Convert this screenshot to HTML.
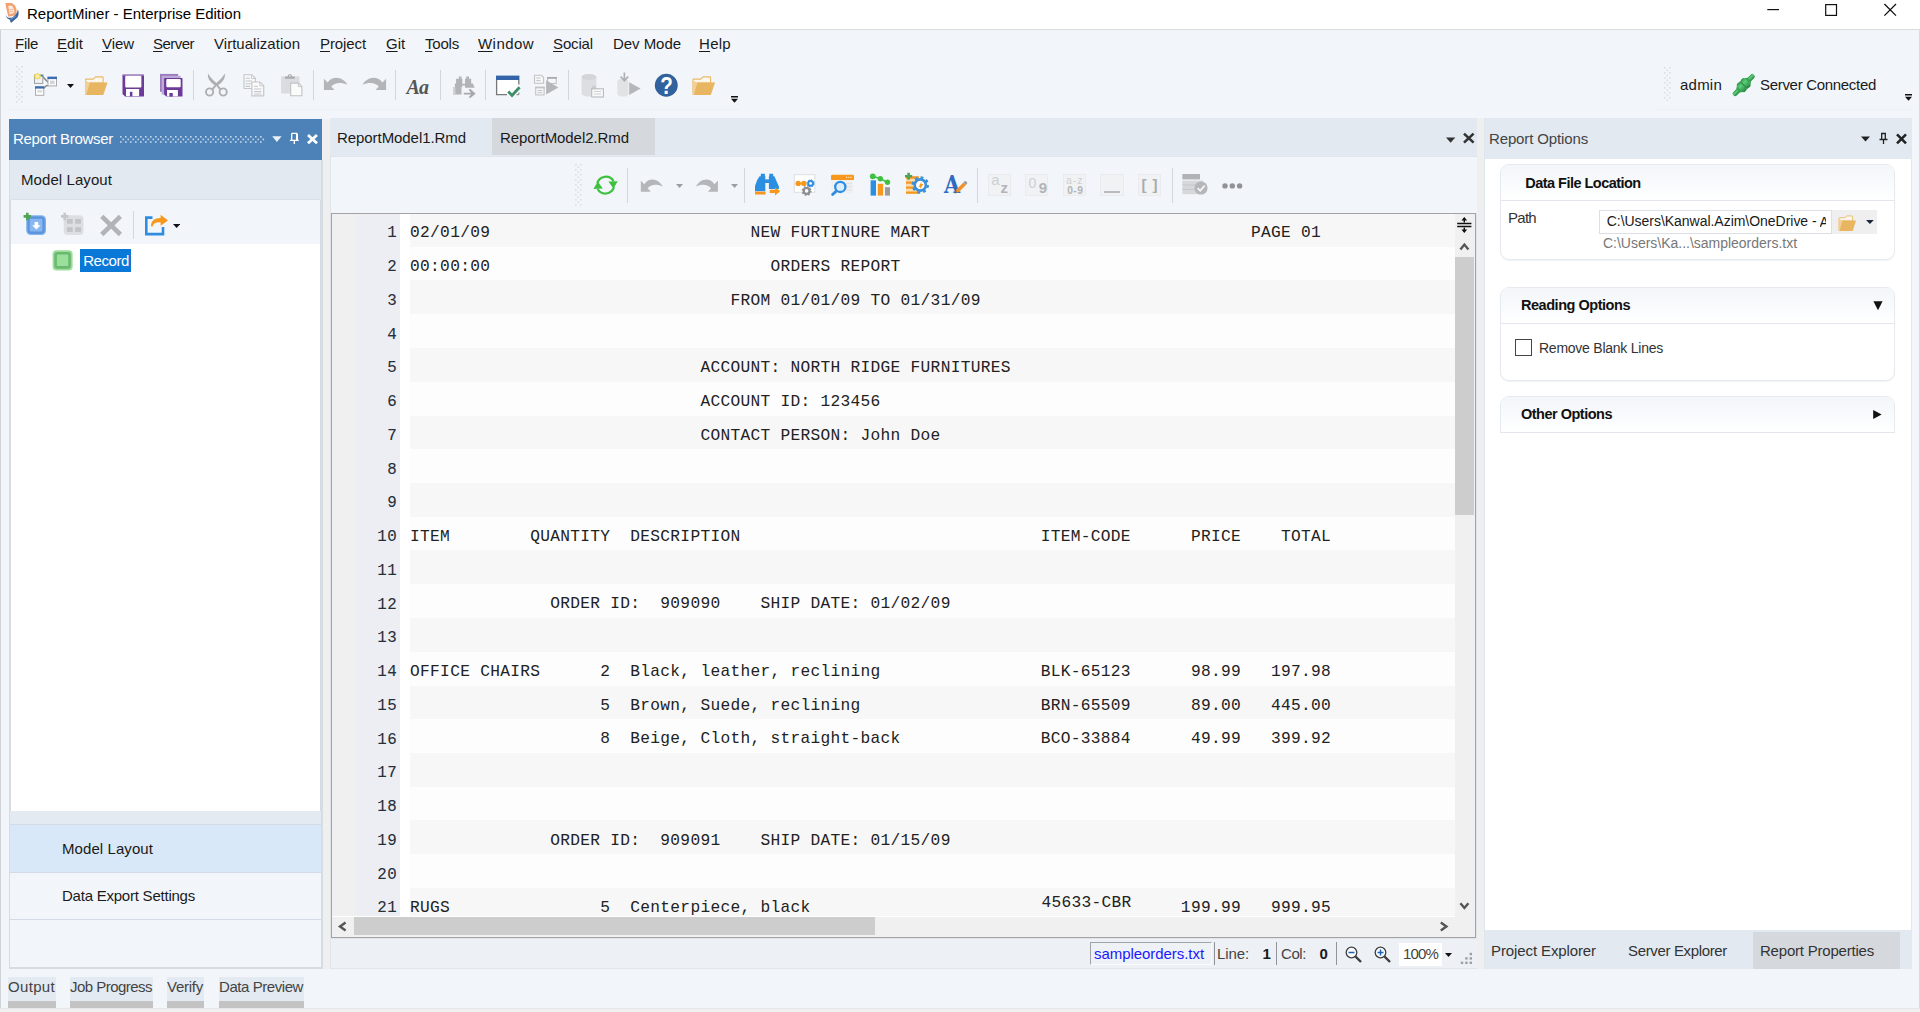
<!DOCTYPE html>
<html><head><meta charset="utf-8"><title>ReportMiner - Enterprise Edition</title>
<style>
html,body{margin:0;padding:0;}
body{width:1920px;height:1012px;overflow:hidden;background:#f2f6fa;position:relative;font-family:"Liberation Sans",sans-serif;}
.t{position:absolute;white-space:pre;margin:0;}
.r{position:absolute;box-sizing:border-box;}
u{text-decoration:underline;text-underline-offset:1.5px;text-decoration-thickness:1px;}
</style></head><body>
<div class="r" style="left:0px;top:0px;width:1920px;height:29px;background:#ffffff;"></div>
<div class="r" style="left:0px;top:29px;width:1920px;height:1px;background:#d9dcdf;"></div>
<div class="r" style="left:0px;top:30px;width:1px;height:982px;background:#d0d4d8;"></div>
<div class="r" style="left:1919px;top:30px;width:1px;height:982px;background:#d9dcdf;"></div>
<div class="t" style="left:27.00px;top:3.80px;font:400 15px/20px 'Liberation Sans',sans-serif;letter-spacing:-0.008px;color:#000;">ReportMiner - Enterprise Edition</div>
<svg class="r" style="left:3px;top:1px" width="19" height="24" viewBox="3 1 19 24"><path d="M5.4 3 L11.6 3.1 C15.4 4.8 17.2 9 16.4 13.4 L14.6 15.6 L8.4 16.8 C7 12 6 7 5.4 3 Z" fill="#f3a170"/><path d="M8.2 6 L11.4 5.6 C13.6 7.4 14.6 10.2 14.2 12.8 L9.8 14.6 Z" fill="#fdeadf"/><path d="M9.5 9.5 H13.5 M9.8 11.6 H13.2" stroke="#f6b993" stroke-width="1"/><path d="M5.7 14.4 C6.4 17.3 9 18.6 12 17.4 C15 16 17.4 13 17.9 9.2 C19 12 18.8 15 17.6 17.2 L11 22.9 L9.6 19.6 C7.5 19 5.9 17 5.7 14.4 Z" fill="#3a689e"/><path d="M10.6 19.4 L15.6 16.2" stroke="#86a6c9" stroke-width="0.9"/></svg>
<svg class="r" style="left:1760px;top:0px;" width="160" height="29" viewBox="0 0 160 29"><path d="M7.3 9.6 H19" stroke="#111" stroke-width="1.2" fill="none"/><rect x="65.7" y="4.6" width="10.8" height="10.8" fill="none" stroke="#111" stroke-width="1.2"/><path d="M124.4 4 L136 15.6 M136 4 L124.4 15.6" stroke="#111" stroke-width="1.3" fill="none"/></svg>
<div class="t" style="left:15.00px;top:33.80px;font:400 15px/20px 'Liberation Sans',sans-serif;letter-spacing:-0.293px;color:#1a1a1a;"><u>F</u>ile</div>
<div class="t" style="left:57.00px;top:33.80px;font:400 15px/20px 'Liberation Sans',sans-serif;letter-spacing:0.038px;color:#1a1a1a;"><u>E</u>dit</div>
<div class="t" style="left:102.00px;top:33.80px;font:400 15px/20px 'Liberation Sans',sans-serif;letter-spacing:-0.061px;color:#1a1a1a;"><u>V</u>iew</div>
<div class="t" style="left:153.00px;top:33.80px;font:400 15px/20px 'Liberation Sans',sans-serif;letter-spacing:-0.530px;color:#1a1a1a;"><u>S</u>erver</div>
<div class="t" style="left:214.00px;top:33.80px;font:400 15px/20px 'Liberation Sans',sans-serif;letter-spacing:0.028px;color:#1a1a1a;">Vi<u>r</u>tualization</div>
<div class="t" style="left:320.00px;top:33.80px;font:400 15px/20px 'Liberation Sans',sans-serif;letter-spacing:-0.098px;color:#1a1a1a;"><u>P</u>roject</div>
<div class="t" style="left:386.00px;top:33.80px;font:400 15px/20px 'Liberation Sans',sans-serif;letter-spacing:-0.056px;color:#1a1a1a;"><u>G</u>it</div>
<div class="t" style="left:425.00px;top:33.80px;font:400 15px/20px 'Liberation Sans',sans-serif;letter-spacing:-0.204px;color:#1a1a1a;"><u>T</u>ools</div>
<div class="t" style="left:478.00px;top:33.80px;font:400 15px/20px 'Liberation Sans',sans-serif;letter-spacing:0.442px;color:#1a1a1a;"><u>W</u>indow</div>
<div class="t" style="left:553.00px;top:33.80px;font:400 15px/20px 'Liberation Sans',sans-serif;letter-spacing:-0.143px;color:#1a1a1a;"><u>S</u>ocial</div>
<div class="t" style="left:613.00px;top:33.80px;font:400 15px/20px 'Liberation Sans',sans-serif;letter-spacing:-0.046px;color:#1a1a1a;">Dev Mode</div>
<div class="t" style="left:699.00px;top:33.80px;font:400 15px/20px 'Liberation Sans',sans-serif;letter-spacing:0.287px;color:#1a1a1a;"><u>H</u>elp</div>
<svg class="r" style="left:16px;top:66px;" width="7" height="37" viewBox="0 0 7 37"><rect x="0" y="0.0" width="1.6" height="1.6" fill="#dbe0e6"/><rect x="5" y="0.0" width="1.6" height="1.6" fill="#dbe0e6"/><rect x="2.5" y="2.5" width="1.6" height="1.6" fill="#dbe0e6"/><rect x="0" y="5.0" width="1.6" height="1.6" fill="#dbe0e6"/><rect x="5" y="5.0" width="1.6" height="1.6" fill="#dbe0e6"/><rect x="2.5" y="7.5" width="1.6" height="1.6" fill="#dbe0e6"/><rect x="0" y="10.0" width="1.6" height="1.6" fill="#dbe0e6"/><rect x="5" y="10.0" width="1.6" height="1.6" fill="#dbe0e6"/><rect x="2.5" y="12.5" width="1.6" height="1.6" fill="#dbe0e6"/><rect x="0" y="15.0" width="1.6" height="1.6" fill="#dbe0e6"/><rect x="5" y="15.0" width="1.6" height="1.6" fill="#dbe0e6"/><rect x="2.5" y="17.5" width="1.6" height="1.6" fill="#dbe0e6"/><rect x="0" y="20.0" width="1.6" height="1.6" fill="#dbe0e6"/><rect x="5" y="20.0" width="1.6" height="1.6" fill="#dbe0e6"/><rect x="2.5" y="22.5" width="1.6" height="1.6" fill="#dbe0e6"/><rect x="0" y="25.0" width="1.6" height="1.6" fill="#dbe0e6"/><rect x="5" y="25.0" width="1.6" height="1.6" fill="#dbe0e6"/><rect x="2.5" y="27.5" width="1.6" height="1.6" fill="#dbe0e6"/><rect x="0" y="30.0" width="1.6" height="1.6" fill="#dbe0e6"/><rect x="5" y="30.0" width="1.6" height="1.6" fill="#dbe0e6"/><rect x="2.5" y="32.5" width="1.6" height="1.6" fill="#dbe0e6"/><rect x="0" y="35.0" width="1.6" height="1.6" fill="#dbe0e6"/><rect x="5" y="35.0" width="1.6" height="1.6" fill="#dbe0e6"/></svg>
<svg class="r" style="left:1664px;top:67px;" width="7" height="35" viewBox="0 0 7 35"><rect x="0" y="0.0" width="1.6" height="1.6" fill="#dbe0e6"/><rect x="5" y="0.0" width="1.6" height="1.6" fill="#dbe0e6"/><rect x="2.5" y="2.5" width="1.6" height="1.6" fill="#dbe0e6"/><rect x="0" y="5.0" width="1.6" height="1.6" fill="#dbe0e6"/><rect x="5" y="5.0" width="1.6" height="1.6" fill="#dbe0e6"/><rect x="2.5" y="7.5" width="1.6" height="1.6" fill="#dbe0e6"/><rect x="0" y="10.0" width="1.6" height="1.6" fill="#dbe0e6"/><rect x="5" y="10.0" width="1.6" height="1.6" fill="#dbe0e6"/><rect x="2.5" y="12.5" width="1.6" height="1.6" fill="#dbe0e6"/><rect x="0" y="15.0" width="1.6" height="1.6" fill="#dbe0e6"/><rect x="5" y="15.0" width="1.6" height="1.6" fill="#dbe0e6"/><rect x="2.5" y="17.5" width="1.6" height="1.6" fill="#dbe0e6"/><rect x="0" y="20.0" width="1.6" height="1.6" fill="#dbe0e6"/><rect x="5" y="20.0" width="1.6" height="1.6" fill="#dbe0e6"/><rect x="2.5" y="22.5" width="1.6" height="1.6" fill="#dbe0e6"/><rect x="0" y="25.0" width="1.6" height="1.6" fill="#dbe0e6"/><rect x="5" y="25.0" width="1.6" height="1.6" fill="#dbe0e6"/><rect x="2.5" y="27.5" width="1.6" height="1.6" fill="#dbe0e6"/><rect x="0" y="30.0" width="1.6" height="1.6" fill="#dbe0e6"/><rect x="5" y="30.0" width="1.6" height="1.6" fill="#dbe0e6"/><rect x="2.5" y="32.5" width="1.6" height="1.6" fill="#dbe0e6"/></svg>
<div class="r" style="left:8px;top:109px;width:732px;height:1px;background:#eef1f3;"></div>
<div class="r" style="left:1655px;top:109px;width:258px;height:1px;background:#eef1f3;"></div>
<div class="r" style="left:193px;top:70px;width:1px;height:30px;background:#d3d7dd;"></div>
<div class="r" style="left:313px;top:70px;width:1px;height:30px;background:#d3d7dd;"></div>
<div class="r" style="left:395px;top:70px;width:1px;height:30px;background:#d3d7dd;"></div>
<div class="r" style="left:440px;top:70px;width:1px;height:30px;background:#d3d7dd;"></div>
<div class="r" style="left:485px;top:70px;width:1px;height:30px;background:#d3d7dd;"></div>
<div class="r" style="left:568px;top:70px;width:1px;height:30px;background:#d3d7dd;"></div>
<svg class="r" style="left:67px;top:84px;" width="7" height="4" viewBox="0 0 7 4"><path d="M0 0 H7 L3.5 4 Z" fill="#111"/></svg>
<svg class="r" style="left:84px;top:75px" width="25" height="21" viewBox="84 75 25 21"><path d="M85.5 79.6 Q85.5 79.1 86 79.1 H93.2 L95.6 76.9 H102.4 Q103.1 76.9 103.1 77.6 V83 H89.5 L85.5 93 Z" fill="#fdf6ea" stroke="#e9b968" stroke-width="1.1"/><path d="M89.3 82.4 H107.6 L103.3 94.9 H85 Z" fill="#e8b661"/><path d="M85 80 V94.9 H86.2 L90 82.4 H89 Z" fill="#f1cf96"/></svg>
<svg class="r" style="left:691px;top:75px" width="25" height="21" viewBox="691 75 25 21"><g transform="translate(607.5,0)"><path d="M85.5 79.6 Q85.5 79.1 86 79.1 H93.2 L95.6 76.9 H102.4 Q103.1 76.9 103.1 77.6 V83 H89.5 L85.5 93 Z" fill="#fdf6ea" stroke="#e9b968" stroke-width="1.1"/><path d="M89.3 82.4 H107.6 L103.3 94.9 H85 Z" fill="#e8b661"/><path d="M85 80 V94.9 H86.2 L90 82.4 H89 Z" fill="#f1cf96"/></g></svg>
<svg class="r" style="left:121px;top:73px" width="25" height="25" viewBox="121 73 25 25"><path d="M122.5 75.2 Q122.5 74.5 123.2 74.5 H143.3 Q144 74.5 144 75.2 V95.9 Q144 96.6 143.3 96.6 H125 L122.5 94.1 Z" fill="#6c3a98"/><rect x="122.5" y="74.5" width="21.5" height="1" fill="#b79fd0"/><rect x="125.2" y="75.8" width="16.2" height="11.6" rx="1" fill="#fff"/><rect x="126" y="89" width="13.1" height="7.3" fill="#fff"/><rect x="129.9" y="91.8" width="2.5" height="4.8" fill="#6c3a98"/><rect x="125" y="96.1" width="15" height="0.6" fill="#a78bc6"/></svg>
<svg class="r" style="left:159px;top:72px" width="26" height="26" viewBox="159 72 26 26"><rect x="160" y="73.9" width="18.1" height="17.9" fill="#9b7dbd"/><rect x="161.7" y="75.8" width="19" height="18.8" fill="#bdaad7"/><path d="M164.1 78.7 Q164.1 78 164.8 78 H181.8 Q182.5 78 182.5 78.7 V95.9 Q182.5 96.6 181.8 96.6 H166.3 L164.1 94.4 Z" fill="#6c3a98"/><rect x="166.3" y="79.1" width="14.4" height="8.1" rx="1" fill="#fff"/><rect x="167" y="90" width="10.9" height="6.3" fill="#fff"/><rect x="169.4" y="93" width="3.4" height="3.6" fill="#6c3a98"/></svg>
<svg class="r" style="left:203px;top:72px" width="27" height="26" viewBox="203 72 27 26"><path d="M208 73.4 C207.2 78 210 82 214.6 85 L211.5 89 L213.2 90 L216.4 86 L216.4 83 C213 80 210 77 208 73.4 Z M224.8 73.4 C225.6 78 222.8 82 218.2 85 L221.3 89 L219.6 90 L216.4 86 L216.4 83 C219.8 80 222.8 77 224.8 73.4 Z" fill="#adafb2"/><circle cx="209.6" cy="92" r="3.6" fill="none" stroke="#adafb2" stroke-width="1.9"/><circle cx="223.2" cy="92" r="3.6" fill="none" stroke="#adafb2" stroke-width="1.9"/></svg>
<svg class="r" style="left:242px;top:73px" width="24" height="25" viewBox="242 73 24 25"><path d="M244 74.7 H251.8 L255.4 78.3 V88.5 H244 Z" fill="#f7f8f9" stroke="#c4c6c9" stroke-width="1.1"/><path d="M251.6 74.9 V78.5 H255.2" fill="none" stroke="#c4c6c9" stroke-width="0.9"/><path d="M245.5 78.3 H250 M245.5 81 H252 M245.5 83.8 H251 M245.5 86.4 H250" stroke="#c4c6c9" stroke-width="1.1"/><path d="M251.9 82 H260 L263.7 85.7 V95.8 H251.9 Z" fill="#fbfbfc" stroke="#c4c6c9" stroke-width="1.2"/><path d="M259.8 82.2 V85.9 H263.5" fill="none" stroke="#c4c6c9" stroke-width="0.9"/><path d="M254 86.3 H258 M254 89 H261.5 M254 91.6 H261.5 M254 94 H261.5" stroke="#c4c6c9" stroke-width="1.1"/></svg>
<svg class="r" style="left:280px;top:72px" width="24" height="26" viewBox="280 72 24 26"><rect x="281.1" y="76.2" width="18.4" height="17.2" rx="1" fill="#dbdcdf"/><path d="M285 78.8 V76.4 H287.6 Q287.8 73.9 289.9 73.9 Q292 73.9 292.2 76.4 H294.8 V78.8 Z" fill="#a9abae"/><circle cx="289.9" cy="75.8" r="0.9" fill="#e8eaed"/><path d="M290.7 83.1 H298.6 L301.9 86.4 V95.8 H290.7 Z" fill="#fbfbfc" stroke="#c0c2c5" stroke-width="1.1"/><path d="M298.4 83.3 V86.6 H301.7" fill="none" stroke="#c0c2c5" stroke-width="0.9"/></svg>
<svg class="r" style="left:322px;top:74px" width="28" height="18" viewBox="322 74 28 18"><path d="M323.9 78.8 L323.9 90 L334.6 90 L331.2 86.4 C334.5 82.6 341 81.8 347.5 84.8 C343.5 77.6 333.5 74.6 327.6 82.4 Z" fill="#b3b5b8"/></svg>
<svg class="r" style="left:360px;top:74px" width="28" height="18" viewBox="360 74 28 18"><g transform="translate(710,0) scale(-1,1)"><path d="M323.9 78.8 L323.9 90 L334.6 90 L331.2 86.4 C334.5 82.6 341 81.8 347.5 84.8 C343.5 77.6 333.5 74.6 327.6 82.4 Z" fill="#b3b5b8"/></g></svg>
<div class="t" style="left:406.50px;top:77.07px;font:700 20px/20px 'Liberation Sans',sans-serif;letter-spacing:-0.834px;color:#555;font-family:'Liberation Serif',serif;font-style:italic;">Aa</div>
<svg class="r" style="left:451px;top:75px" width="27" height="24" viewBox="451 75 27 24"><path d="M458.9 76.6 H461.5 V78.7 H462.3 V83.8 H465 V78.7 H466.2 V76.6 H469 V78.7 H471.2 V83.4 H472.9 L474.6 87.8 H465 V85.5 H462.3 V87.1 H461.5 V94.5 H453 V87.1 H454.9 V83.4 H456.1 V78.7 H458.9 Z" fill="#b1b3b6"/><rect x="453" y="87.1" width="2.4" height="7.4" fill="#d0d2d5"/><path d="M463.8 92.8 H471 L468.6 89.8 L470.4 89 L475.7 93.7 L470.2 98 L468.6 97.2 L471 94.5 H463.8 Z" fill="#a6a8ab"/></svg>
<svg class="r" style="left:494px;top:74px" width="29" height="25" viewBox="494 74 29 25"><rect x="496.6" y="76.2" width="22.2" height="18.5" fill="#ffffff"/><path d="M496.6 80 V94.7 H507" fill="none" stroke="#77787b" stroke-width="1.3"/><path d="M518.8 80 V84.5" fill="none" stroke="#77787b" stroke-width="1.3"/><path d="M516.5 94.7 H518.8 V92.5" fill="none" stroke="#77787b" stroke-width="1"/><rect x="496" y="75.6" width="23.4" height="4.4" fill="#3563a8"/><path d="M508.3 91.6 L512 95.4 L519.6 87.3" fill="none" stroke="#3c9069" stroke-width="2.9"/></svg>
<svg class="r" style="left:532px;top:73px" width="28" height="25" viewBox="532 73 28 25"><g fill="#f6f7f8" stroke="#c1c3c6" stroke-width="1.1"><path d="M534.5 75.3 H541.5 L543.6 77.5 V83.3 H534.5 Z"/><rect x="547.6" y="77.5" width="8.6" height="6"/><rect x="535.7" y="87.3" width="8.4" height="7.6"/></g><rect x="547" y="77" width="9.8" height="1.8" fill="#a9abae"/><rect x="535.2" y="86.8" width="9.4" height="1.6" fill="#c1c3c6"/><path d="M536.3 78 H540.5 M536.3 80.6 H540.5 M537.6 90.5 H542.3 M537.6 92.7 H542.3" stroke="#c1c3c6" stroke-width="1"/><path d="M546.1 80.2 L558.4 87.4 L546.1 94.6 Z" fill="#b4b6b9"/></svg>
<svg class="r" style="left:580px;top:72px" width="26" height="27" viewBox="580 72 26 27"><path d="M581.6 77 C581.6 72.9 596.4 72.9 596.4 77 V93.5 C596.4 97.6 581.6 97.6 581.6 93.5 Z" fill="#dddee1"/><ellipse cx="589" cy="77" rx="7.4" ry="3" fill="#d4d5d8"/><path d="M592 86 L595 89 M595 85.5 V89 H591.5" stroke="#c3c5c8" stroke-width="1.1" fill="none"/><rect x="591.7" y="88.8" width="11.7" height="8.2" fill="#f8f9fa" stroke="#b9bbbe" stroke-width="1.1"/><path d="M594 91.5 H601 M594 94 H601" stroke="#cfd1d4" stroke-width="1"/></svg>
<svg class="r" style="left:616px;top:71px" width="27" height="27" viewBox="616 71 27 27"><path d="M617.4 81.5 C617.4 78.3 628.4 78.3 628.4 81.5 V94 C628.4 97.4 617.4 97.4 617.4 94 Z" fill="#e1e2e4"/><path d="M624.4 72.6 V80 M620.6 76.6 L624.4 80.8 L628.2 76.6" stroke="#aeb0b3" stroke-width="1.7" fill="none"/><path d="M629.2 82.2 L640.6 88.6 L629.2 95 Z" fill="#b4b6b9"/></svg>
<svg class="r" style="left:653px;top:72px" width="27" height="26" viewBox="653 72 27 26"><circle cx="666.3" cy="85.25" r="11.45" fill="#31629e"/></svg>
<div class="t" style="left:658.90px;top:76.41px;font:700 24.5px/20px 'Liberation Sans',sans-serif;letter-spacing:0.000px;color:#fff;transform:scaleX(0.84);transform-origin:50% 50%;">?</div>
<svg class="r" style="left:731px;top:96.3px" width="8" height="8.0" viewBox="731 96.3 8 8.0"><path d="M731 96.3 H738 V97.8 H731 Z M731 99.1 H738 L734.5 103.1 Z" fill="#111"/></svg>
<svg class="r" style="left:1905px;top:94.3px" width="8" height="8.0" viewBox="1905 94.3 8 8.0"><path d="M1905 94.3 H1912 V95.8 H1905 Z M1905 97.1 H1912 L1908.5 101.1 Z" fill="#111"/></svg>
<div class="t" style="left:1680.00px;top:74.80px;font:400 15px/20px 'Liberation Sans',sans-serif;letter-spacing:0.229px;color:#1a1a1a;">admin</div>
<div class="t" style="left:1760.00px;top:74.80px;font:400 15px/20px 'Liberation Sans',sans-serif;letter-spacing:-0.307px;color:#1a1a1a;">Server Connected</div>
<svg class="r" style="left:1730px;top:72px" width="28" height="27" viewBox="1730 72 28 27"><defs><linearGradient id="pg" x1="0" y1="0" x2="0" y2="1"><stop offset="0" stop-color="#2a9443"/><stop offset="0.35" stop-color="#5ccf7d"/><stop offset="1" stop-color="#23853a"/></linearGradient></defs><g transform="translate(1743.7,85.1) rotate(-45)"><rect x="-14.6" y="-2.4" width="12" height="4.8" rx="2.2" fill="url(#pg)"/><rect x="2.6" y="-2.4" width="12" height="4.8" rx="2.2" fill="url(#pg)"/><path d="M-8 -2.4 L-5 -4.6 V4.6 L-8 2.4 Z M8 -2.4 L5 -4.6 V4.6 L8 2.4 Z" fill="#38a553"/><rect x="-5.4" y="-5.6" width="5.2" height="11.2" rx="2" fill="url(#pg)"/><rect x="0.2" y="-5.6" width="5.2" height="11.2" rx="2" fill="url(#pg)"/><rect x="-0.5" y="-5.4" width="1" height="10.8" fill="#1c7a34"/></g></svg>
<svg class="r" style="left:32px;top:71px" width="28" height="27" viewBox="32 71 28 27"><path d="M42.6 76.6 L48 82.2 M48 85.6 H46.4 L43.8 88.2" stroke="#808285" stroke-width="1.4" fill="none"/>
<rect x="34.5" y="75.2" width="8.3" height="8.2" fill="#f1f2f3" stroke="#9d9fa2" stroke-width="1"/><rect x="40" y="74.7" width="3.3" height="1.8" fill="#4a7fc1"/>
<rect x="48" y="77.3" width="8.5" height="8.6" fill="#ffffff" stroke="#a9abae" stroke-width="1"/><rect x="47.5" y="76.7" width="9.5" height="2.4" fill="#3b6db3"/><rect x="50" y="80.6" width="4.6" height="3.6" fill="#d3d4d6"/>
<rect x="35.5" y="86.9" width="8.3" height="8.4" fill="#ffffff" stroke="#a9abae" stroke-width="1"/><rect x="35" y="86.3" width="9.3" height="2.3" fill="#3b6db3"/><rect x="37.2" y="90" width="5" height="2.6" fill="#dcdddf"/>
<path d="M37.5 72.4 L38.6 74 L40.5 73.4 L40.2 75.3 L41.9 76.2 L40.2 77.1 L40.5 79 L38.6 78.4 L37.5 80 L36.4 78.4 L34.5 79 L34.8 77.1 L33.1 76.2 L34.8 75.3 L34.5 73.4 L36.4 74 Z" fill="#f3d544"/><circle cx="37.5" cy="76.2" r="2" fill="#fbf0a5"/></svg>
<div class="r" style="left:9px;top:119px;width:314px;height:850px;background:#d6dce3;"></div>
<div class="r" style="left:9px;top:119px;width:313px;height:41px;background:#4d82b8;"></div>
<div class="t" style="left:13.00px;top:129.10px;font:400 15px/20px 'Liberation Sans',sans-serif;letter-spacing:-0.300px;color:#ffffff;">Report Browser</div>
<svg class="r" style="left:120px;top:136px;" width="150" height="8" viewBox="0 0 150 8"><rect x="0.0" y="0.0" width="1.6" height="1.6" fill="#c3d6ea"/><rect x="5.0" y="0.0" width="1.6" height="1.6" fill="#c3d6ea"/><rect x="10.0" y="0.0" width="1.6" height="1.6" fill="#c3d6ea"/><rect x="15.0" y="0.0" width="1.6" height="1.6" fill="#c3d6ea"/><rect x="20.0" y="0.0" width="1.6" height="1.6" fill="#c3d6ea"/><rect x="25.0" y="0.0" width="1.6" height="1.6" fill="#c3d6ea"/><rect x="30.0" y="0.0" width="1.6" height="1.6" fill="#c3d6ea"/><rect x="35.0" y="0.0" width="1.6" height="1.6" fill="#c3d6ea"/><rect x="40.0" y="0.0" width="1.6" height="1.6" fill="#c3d6ea"/><rect x="45.0" y="0.0" width="1.6" height="1.6" fill="#c3d6ea"/><rect x="50.0" y="0.0" width="1.6" height="1.6" fill="#c3d6ea"/><rect x="55.0" y="0.0" width="1.6" height="1.6" fill="#c3d6ea"/><rect x="60.0" y="0.0" width="1.6" height="1.6" fill="#c3d6ea"/><rect x="65.0" y="0.0" width="1.6" height="1.6" fill="#c3d6ea"/><rect x="70.0" y="0.0" width="1.6" height="1.6" fill="#c3d6ea"/><rect x="75.0" y="0.0" width="1.6" height="1.6" fill="#c3d6ea"/><rect x="80.0" y="0.0" width="1.6" height="1.6" fill="#c3d6ea"/><rect x="85.0" y="0.0" width="1.6" height="1.6" fill="#c3d6ea"/><rect x="90.0" y="0.0" width="1.6" height="1.6" fill="#c3d6ea"/><rect x="95.0" y="0.0" width="1.6" height="1.6" fill="#c3d6ea"/><rect x="100.0" y="0.0" width="1.6" height="1.6" fill="#c3d6ea"/><rect x="105.0" y="0.0" width="1.6" height="1.6" fill="#c3d6ea"/><rect x="110.0" y="0.0" width="1.6" height="1.6" fill="#c3d6ea"/><rect x="115.0" y="0.0" width="1.6" height="1.6" fill="#c3d6ea"/><rect x="120.0" y="0.0" width="1.6" height="1.6" fill="#c3d6ea"/><rect x="125.0" y="0.0" width="1.6" height="1.6" fill="#c3d6ea"/><rect x="130.0" y="0.0" width="1.6" height="1.6" fill="#c3d6ea"/><rect x="135.0" y="0.0" width="1.6" height="1.6" fill="#c3d6ea"/><rect x="140.0" y="0.0" width="1.6" height="1.6" fill="#c3d6ea"/><rect x="2.5" y="2.6" width="1.6" height="1.6" fill="#c3d6ea"/><rect x="7.5" y="2.6" width="1.6" height="1.6" fill="#c3d6ea"/><rect x="12.5" y="2.6" width="1.6" height="1.6" fill="#c3d6ea"/><rect x="17.5" y="2.6" width="1.6" height="1.6" fill="#c3d6ea"/><rect x="22.5" y="2.6" width="1.6" height="1.6" fill="#c3d6ea"/><rect x="27.5" y="2.6" width="1.6" height="1.6" fill="#c3d6ea"/><rect x="32.5" y="2.6" width="1.6" height="1.6" fill="#c3d6ea"/><rect x="37.5" y="2.6" width="1.6" height="1.6" fill="#c3d6ea"/><rect x="42.5" y="2.6" width="1.6" height="1.6" fill="#c3d6ea"/><rect x="47.5" y="2.6" width="1.6" height="1.6" fill="#c3d6ea"/><rect x="52.5" y="2.6" width="1.6" height="1.6" fill="#c3d6ea"/><rect x="57.5" y="2.6" width="1.6" height="1.6" fill="#c3d6ea"/><rect x="62.5" y="2.6" width="1.6" height="1.6" fill="#c3d6ea"/><rect x="67.5" y="2.6" width="1.6" height="1.6" fill="#c3d6ea"/><rect x="72.5" y="2.6" width="1.6" height="1.6" fill="#c3d6ea"/><rect x="77.5" y="2.6" width="1.6" height="1.6" fill="#c3d6ea"/><rect x="82.5" y="2.6" width="1.6" height="1.6" fill="#c3d6ea"/><rect x="87.5" y="2.6" width="1.6" height="1.6" fill="#c3d6ea"/><rect x="92.5" y="2.6" width="1.6" height="1.6" fill="#c3d6ea"/><rect x="97.5" y="2.6" width="1.6" height="1.6" fill="#c3d6ea"/><rect x="102.5" y="2.6" width="1.6" height="1.6" fill="#c3d6ea"/><rect x="107.5" y="2.6" width="1.6" height="1.6" fill="#c3d6ea"/><rect x="112.5" y="2.6" width="1.6" height="1.6" fill="#c3d6ea"/><rect x="117.5" y="2.6" width="1.6" height="1.6" fill="#c3d6ea"/><rect x="122.5" y="2.6" width="1.6" height="1.6" fill="#c3d6ea"/><rect x="127.5" y="2.6" width="1.6" height="1.6" fill="#c3d6ea"/><rect x="132.5" y="2.6" width="1.6" height="1.6" fill="#c3d6ea"/><rect x="137.5" y="2.6" width="1.6" height="1.6" fill="#c3d6ea"/><rect x="142.5" y="2.6" width="1.6" height="1.6" fill="#c3d6ea"/><rect x="0.0" y="5.2" width="1.6" height="1.6" fill="#c3d6ea"/><rect x="5.0" y="5.2" width="1.6" height="1.6" fill="#c3d6ea"/><rect x="10.0" y="5.2" width="1.6" height="1.6" fill="#c3d6ea"/><rect x="15.0" y="5.2" width="1.6" height="1.6" fill="#c3d6ea"/><rect x="20.0" y="5.2" width="1.6" height="1.6" fill="#c3d6ea"/><rect x="25.0" y="5.2" width="1.6" height="1.6" fill="#c3d6ea"/><rect x="30.0" y="5.2" width="1.6" height="1.6" fill="#c3d6ea"/><rect x="35.0" y="5.2" width="1.6" height="1.6" fill="#c3d6ea"/><rect x="40.0" y="5.2" width="1.6" height="1.6" fill="#c3d6ea"/><rect x="45.0" y="5.2" width="1.6" height="1.6" fill="#c3d6ea"/><rect x="50.0" y="5.2" width="1.6" height="1.6" fill="#c3d6ea"/><rect x="55.0" y="5.2" width="1.6" height="1.6" fill="#c3d6ea"/><rect x="60.0" y="5.2" width="1.6" height="1.6" fill="#c3d6ea"/><rect x="65.0" y="5.2" width="1.6" height="1.6" fill="#c3d6ea"/><rect x="70.0" y="5.2" width="1.6" height="1.6" fill="#c3d6ea"/><rect x="75.0" y="5.2" width="1.6" height="1.6" fill="#c3d6ea"/><rect x="80.0" y="5.2" width="1.6" height="1.6" fill="#c3d6ea"/><rect x="85.0" y="5.2" width="1.6" height="1.6" fill="#c3d6ea"/><rect x="90.0" y="5.2" width="1.6" height="1.6" fill="#c3d6ea"/><rect x="95.0" y="5.2" width="1.6" height="1.6" fill="#c3d6ea"/><rect x="100.0" y="5.2" width="1.6" height="1.6" fill="#c3d6ea"/><rect x="105.0" y="5.2" width="1.6" height="1.6" fill="#c3d6ea"/><rect x="110.0" y="5.2" width="1.6" height="1.6" fill="#c3d6ea"/><rect x="115.0" y="5.2" width="1.6" height="1.6" fill="#c3d6ea"/><rect x="120.0" y="5.2" width="1.6" height="1.6" fill="#c3d6ea"/><rect x="125.0" y="5.2" width="1.6" height="1.6" fill="#c3d6ea"/><rect x="130.0" y="5.2" width="1.6" height="1.6" fill="#c3d6ea"/><rect x="135.0" y="5.2" width="1.6" height="1.6" fill="#c3d6ea"/><rect x="140.0" y="5.2" width="1.6" height="1.6" fill="#c3d6ea"/></svg>
<svg class="r" style="left:270px;top:131px" width="50" height="16" viewBox="270 131 50 16"><path d="M272.2 136.3 H281.6 L276.9 141.9 Z" fill="#e8f0f8"/><path d="M291.6 133.4 H297.2 M291.7 133.4 V140.4 M296.6 133.4 V140.4 M289.9 140.4 H298.8 M294.3 140.4 V144" stroke="#fff" stroke-width="1.3" fill="none"/><path d="M297 133.4 V140.4" stroke="#fff" stroke-width="2"/><path d="M308 135 L317 143.2 M317 135 L308 143.2" stroke="#fff" stroke-width="2.8" fill="none"/></svg>
<div class="r" style="left:10px;top:160px;width:311px;height:40px;background:#e2e9f1;"></div>
<div class="t" style="left:21.00px;top:169.80px;font:400 15px/20px 'Liberation Sans',sans-serif;letter-spacing:0.078px;color:#1a1a1a;">Model Layout</div>
<div class="r" style="left:11px;top:200px;width:309px;height:611px;background:#ffffff;"></div>
<div class="r" style="left:11px;top:200px;width:309px;height:44px;background:#f2f6fa;"></div>
<div class="r" style="left:11px;top:199px;width:309px;height:1px;background:#d9e0e8;"></div>
<div class="r" style="left:133px;top:211px;width:1px;height:28px;background:#d3d7dd;"></div>
<svg class="r" style="left:173.2px;top:224px;" width="7.2" height="4" viewBox="0 0 7.2 4"><path d="M0 0 H7.2 L3.6 4 Z" fill="#111"/></svg>
<svg class="r" style="left:22px;top:211px" width="26" height="26" viewBox="22 211 26 26"><rect x="26.2" y="215.3" width="19.8" height="19.8" rx="4.5" fill="#7fb2ef"/><rect x="28.6" y="217.7" width="15" height="15" rx="2.5" fill="#86b7f2" stroke="#5b92d9" stroke-width="2.2"/><path d="M34.6 222 H38.2 V225.2 H40.6 L36.4 229.6 L32.2 225.2 H34.6 Z" fill="#fff"/><path d="M27.3 212.7 V220.2 M23.6 216.4 H31" stroke="#4ea454" stroke-width="2.6"/></svg>
<svg class="r" style="left:59px;top:211px" width="27" height="26" viewBox="59 211 27 26"><rect x="63.7" y="215.3" width="19.8" height="19.8" rx="4" fill="#dddee1"/><g fill="#c2c3c6"><rect x="66.9" y="219" width="5.8" height="4.7"/><rect x="75.2" y="219" width="5.8" height="4.7"/><rect x="66.9" y="227.2" width="5.8" height="4.7"/><rect x="75.2" y="227.2" width="5.8" height="4.7"/></g><path d="M64.7 212.7 V220.2 M61 216.4 H68.4" stroke="#c6c7ca" stroke-width="2.6"/></svg>
<svg class="r" style="left:98px;top:213px" width="26" height="25" viewBox="98 213 26 25"><path d="M101.8 216.3 L120.4 234.5 M120.4 216.3 L101.8 234.5" stroke="#b2b3b6" stroke-width="4.6" fill="none"/></svg>
<svg class="r" style="left:143px;top:213px" width="27" height="25" viewBox="143 213 27 25"><path d="M152.5 217.6 H146.3 V234.1 H163 V227" fill="none" stroke="#2e8de0" stroke-width="2.6"/><path d="M151 226.3 C151 220.5 155 217.8 160.6 218 V214.8 L168 220.4 L160.6 225.8 V222.4 C156.5 222.2 153.5 223 152.6 226.6 Z" fill="#f7981d"/></svg>
<svg class="r" style="left:51px;top:249px" width="24" height="23" viewBox="51 249 24 23"><rect x="52.6" y="250.2" width="20" height="20.2" rx="4" fill="#9ade9a"/><rect x="55.6" y="253.2" width="14" height="14.2" rx="2" fill="#9be09a" stroke="#6bb870" stroke-width="2.6"/></svg>
<div class="r" style="left:80px;top:249px;width:51px;height:22.5px;background:#0a78d7;"></div>
<div class="t" style="left:83.20px;top:250.70px;font:400 15px/20px 'Liberation Sans',sans-serif;letter-spacing:-0.426px;color:#ffffff;">Record</div>
<div class="r" style="left:10px;top:811px;width:311px;height:14px;background:#e3eaf2;"></div>
<div class="r" style="left:10px;top:825px;width:311px;height:47px;background:#d9e8f8;"></div>
<div class="r" style="left:10px;top:824px;width:311px;height:1px;background:#d3dce6;"></div>
<div class="r" style="left:10px;top:872px;width:311px;height:1px;background:#d3dce6;"></div>
<div class="r" style="left:10px;top:873px;width:311px;height:46px;background:#f2f6fa;"></div>
<div class="r" style="left:10px;top:919px;width:311px;height:1px;background:#d3dce6;"></div>
<div class="r" style="left:10px;top:920px;width:311px;height:47px;background:#f2f6fa;"></div>
<div class="t" style="left:62.00px;top:838.80px;font:400 15px/20px 'Liberation Sans',sans-serif;letter-spacing:0.078px;color:#1a1a1a;">Model Layout</div>
<div class="t" style="left:62.00px;top:886.30px;font:400 15px/20px 'Liberation Sans',sans-serif;letter-spacing:-0.229px;color:#1a1a1a;">Data Export Settings</div>
<div class="r" style="left:8px;top:977px;width:48px;height:24px;background:#e3eaf2;"></div>
<div class="r" style="left:8px;top:1001px;width:48px;height:7.4px;background:#c3c3c3;"></div>
<div class="t" style="left:8.00px;top:976.80px;font:400 15px/20px 'Liberation Sans',sans-serif;letter-spacing:0.328px;color:#444;">Output</div>
<div class="r" style="left:70px;top:977px;width:83px;height:24px;background:#e3eaf2;"></div>
<div class="r" style="left:70px;top:1001px;width:83px;height:7.4px;background:#c3c3c3;"></div>
<div class="t" style="left:70.00px;top:976.80px;font:400 15px/20px 'Liberation Sans',sans-serif;letter-spacing:-0.531px;color:#444;">Job Progress</div>
<div class="r" style="left:167px;top:977px;width:37px;height:24px;background:#e3eaf2;"></div>
<div class="r" style="left:167px;top:1001px;width:37px;height:7.4px;background:#c3c3c3;"></div>
<div class="t" style="left:167.00px;top:976.80px;font:400 15px/20px 'Liberation Sans',sans-serif;letter-spacing:-0.253px;color:#444;">Verify</div>
<div class="r" style="left:219px;top:977px;width:85px;height:24px;background:#e3eaf2;"></div>
<div class="r" style="left:219px;top:1001px;width:85px;height:7.4px;background:#c3c3c3;"></div>
<div class="t" style="left:219.00px;top:976.80px;font:400 15px/20px 'Liberation Sans',sans-serif;letter-spacing:-0.434px;color:#444;">Data Preview</div>
<div class="r" style="left:0px;top:1008px;width:1920px;height:1px;background:#e4e6e8;"></div>
<div class="r" style="left:0px;top:1009px;width:1920px;height:3px;background:#f0f0f0;"></div>
<div class="r" style="left:322px;top:119px;width:8px;height:41px;background:#efefef;"></div>
<div class="r" style="left:323px;top:160px;width:7px;height:809px;background:#efefef;"></div>
<div class="r" style="left:330px;top:118px;width:1147px;height:851px;background:#dfe5eb;"></div>
<div class="r" style="left:330px;top:118px;width:1147px;height:38px;background:#e2e9f1;"></div>
<div class="r" style="left:492px;top:118px;width:163px;height:37px;background:#d5d9de;"></div>
<div class="t" style="left:337.00px;top:127.80px;font:400 15px/20px 'Liberation Sans',sans-serif;letter-spacing:-0.066px;color:#1a1a1a;">ReportModel1.Rmd</div>
<div class="t" style="left:500.00px;top:127.80px;font:400 15px/20px 'Liberation Sans',sans-serif;letter-spacing:-0.066px;color:#1a1a1a;">ReportModel2.Rmd</div>
<svg class="r" style="left:1445px;top:131px;" width="34" height="14" viewBox="0 0 34 14"><path d="M1 6.6 H10.3 L5.65 11.7 Z" fill="#333"/><path d="M19 2.6 L28.6 11.6 M28.6 2.6 L19 11.6" stroke="#333" stroke-width="2.6" fill="none"/></svg>
<div class="r" style="left:331px;top:157px;width:1146px;height:56px;background:#f2f6fa;"></div>
<svg class="r" style="left:575px;top:164px;" width="7" height="42" viewBox="0 0 7 42"><rect x="0" y="0.0" width="1.6" height="1.6" fill="#dbe0e6"/><rect x="5" y="0.0" width="1.6" height="1.6" fill="#dbe0e6"/><rect x="2.5" y="2.5" width="1.6" height="1.6" fill="#dbe0e6"/><rect x="0" y="5.0" width="1.6" height="1.6" fill="#dbe0e6"/><rect x="5" y="5.0" width="1.6" height="1.6" fill="#dbe0e6"/><rect x="2.5" y="7.5" width="1.6" height="1.6" fill="#dbe0e6"/><rect x="0" y="10.0" width="1.6" height="1.6" fill="#dbe0e6"/><rect x="5" y="10.0" width="1.6" height="1.6" fill="#dbe0e6"/><rect x="2.5" y="12.5" width="1.6" height="1.6" fill="#dbe0e6"/><rect x="0" y="15.0" width="1.6" height="1.6" fill="#dbe0e6"/><rect x="5" y="15.0" width="1.6" height="1.6" fill="#dbe0e6"/><rect x="2.5" y="17.5" width="1.6" height="1.6" fill="#dbe0e6"/><rect x="0" y="20.0" width="1.6" height="1.6" fill="#dbe0e6"/><rect x="5" y="20.0" width="1.6" height="1.6" fill="#dbe0e6"/><rect x="2.5" y="22.5" width="1.6" height="1.6" fill="#dbe0e6"/><rect x="0" y="25.0" width="1.6" height="1.6" fill="#dbe0e6"/><rect x="5" y="25.0" width="1.6" height="1.6" fill="#dbe0e6"/><rect x="2.5" y="27.5" width="1.6" height="1.6" fill="#dbe0e6"/><rect x="0" y="30.0" width="1.6" height="1.6" fill="#dbe0e6"/><rect x="5" y="30.0" width="1.6" height="1.6" fill="#dbe0e6"/><rect x="2.5" y="32.5" width="1.6" height="1.6" fill="#dbe0e6"/><rect x="0" y="35.0" width="1.6" height="1.6" fill="#dbe0e6"/><rect x="5" y="35.0" width="1.6" height="1.6" fill="#dbe0e6"/><rect x="2.5" y="37.5" width="1.6" height="1.6" fill="#dbe0e6"/><rect x="0" y="40.0" width="1.6" height="1.6" fill="#dbe0e6"/><rect x="5" y="40.0" width="1.6" height="1.6" fill="#dbe0e6"/></svg>
<div class="r" style="left:627px;top:168px;width:1px;height:35px;background:#d3d7dd;"></div>
<div class="r" style="left:744px;top:168px;width:1px;height:35px;background:#d3d7dd;"></div>
<div class="r" style="left:977px;top:168px;width:1px;height:35px;background:#d3d7dd;"></div>
<div class="r" style="left:1172px;top:168px;width:1px;height:35px;background:#d3d7dd;"></div>
<div class="r" style="left:331px;top:213px;width:1145px;height:725px;background:#f0f0f0;border:1px solid #a3a3a3;"></div>
<div class="r" style="left:332px;top:214px;width:24px;height:703px;background:#f0f0f0;"></div>
<div class="r" style="left:355px;top:214px;width:45px;height:703px;background:linear-gradient(90deg,#f0f0f0 0px,#edeef4 2px);"></div>
<div class="r" style="left:400px;top:214px;width:10px;height:703px;background:#ffffff;"></div>
<div class="r" style="left:410px;top:214px;width:1045px;height:703px;background:#fdfdfd;"></div>
<div class="r" style="left:410px;top:214px;width:1045px;height:33px;background:#f7f7f7;"></div>
<div class="t" style="left:410.10px;top:223.19px;font:400 16.2px/20px 'Liberation Mono',monospace;letter-spacing:0.296px;color:#222;">02/01/09                          NEW FURTINURE MART                                PAGE 01</div>
<div class="t" style="left:387.20px;top:223.29px;font:400 15.8px/20px 'Liberation Mono',monospace;letter-spacing:0.518px;color:#26303a;-webkit-text-stroke:0.1px #26303a;">1</div>
<div class="t" style="left:410.10px;top:256.94px;font:400 16.2px/20px 'Liberation Mono',monospace;letter-spacing:0.296px;color:#222;">00:00:00                            ORDERS REPORT</div>
<div class="t" style="left:387.20px;top:257.04px;font:400 15.8px/20px 'Liberation Mono',monospace;letter-spacing:0.518px;color:#26303a;-webkit-text-stroke:0.1px #26303a;">2</div>
<div class="r" style="left:410px;top:280px;width:1045px;height:34px;background:#f7f7f7;"></div>
<div class="t" style="left:410.10px;top:290.69px;font:400 16.2px/20px 'Liberation Mono',monospace;letter-spacing:0.296px;color:#222;">                                FROM 01/01/09 TO 01/31/09</div>
<div class="t" style="left:387.20px;top:290.79px;font:400 15.8px/20px 'Liberation Mono',monospace;letter-spacing:0.518px;color:#26303a;-webkit-text-stroke:0.1px #26303a;">3</div>
<div class="t" style="left:387.20px;top:324.54px;font:400 15.8px/20px 'Liberation Mono',monospace;letter-spacing:0.518px;color:#26303a;-webkit-text-stroke:0.1px #26303a;">4</div>
<div class="r" style="left:410px;top:348px;width:1045px;height:34px;background:#f7f7f7;"></div>
<div class="t" style="left:410.10px;top:358.19px;font:400 16.2px/20px 'Liberation Mono',monospace;letter-spacing:0.296px;color:#222;">                             ACCOUNT: NORTH RIDGE FURNITURES</div>
<div class="t" style="left:387.20px;top:358.29px;font:400 15.8px/20px 'Liberation Mono',monospace;letter-spacing:0.518px;color:#26303a;-webkit-text-stroke:0.1px #26303a;">5</div>
<div class="t" style="left:410.10px;top:391.94px;font:400 16.2px/20px 'Liberation Mono',monospace;letter-spacing:0.296px;color:#222;">                             ACCOUNT ID: 123456</div>
<div class="t" style="left:387.20px;top:392.04px;font:400 15.8px/20px 'Liberation Mono',monospace;letter-spacing:0.518px;color:#26303a;-webkit-text-stroke:0.1px #26303a;">6</div>
<div class="r" style="left:410px;top:416px;width:1045px;height:33px;background:#f7f7f7;"></div>
<div class="t" style="left:410.10px;top:425.69px;font:400 16.2px/20px 'Liberation Mono',monospace;letter-spacing:0.296px;color:#222;">                             CONTACT PERSON: John Doe</div>
<div class="t" style="left:387.20px;top:425.79px;font:400 15.8px/20px 'Liberation Mono',monospace;letter-spacing:0.518px;color:#26303a;-webkit-text-stroke:0.1px #26303a;">7</div>
<div class="t" style="left:387.20px;top:459.54px;font:400 15.8px/20px 'Liberation Mono',monospace;letter-spacing:0.518px;color:#26303a;-webkit-text-stroke:0.1px #26303a;">8</div>
<div class="r" style="left:410px;top:483px;width:1045px;height:34px;background:#f7f7f7;"></div>
<div class="t" style="left:387.20px;top:493.29px;font:400 15.8px/20px 'Liberation Mono',monospace;letter-spacing:0.518px;color:#26303a;-webkit-text-stroke:0.1px #26303a;">9</div>
<div class="t" style="left:410.10px;top:526.94px;font:400 16.2px/20px 'Liberation Mono',monospace;letter-spacing:0.296px;color:#222;">ITEM        QUANTITY  DESCRIPTION                              ITEM-CODE      PRICE    TOTAL</div>
<div class="t" style="left:377.20px;top:527.04px;font:400 15.8px/20px 'Liberation Mono',monospace;letter-spacing:0.518px;color:#26303a;-webkit-text-stroke:0.1px #26303a;">10</div>
<div class="r" style="left:410px;top:550px;width:1045px;height:34px;background:#f7f7f7;"></div>
<div class="t" style="left:377.20px;top:560.79px;font:400 15.8px/20px 'Liberation Mono',monospace;letter-spacing:0.518px;color:#26303a;-webkit-text-stroke:0.1px #26303a;">11</div>
<div class="t" style="left:410.10px;top:594.44px;font:400 16.2px/20px 'Liberation Mono',monospace;letter-spacing:0.296px;color:#222;">              ORDER ID:  909090    SHIP DATE: 01/02/09</div>
<div class="t" style="left:377.20px;top:594.54px;font:400 15.8px/20px 'Liberation Mono',monospace;letter-spacing:0.518px;color:#26303a;-webkit-text-stroke:0.1px #26303a;">12</div>
<div class="r" style="left:410px;top:618px;width:1045px;height:34px;background:#f7f7f7;"></div>
<div class="t" style="left:377.20px;top:628.29px;font:400 15.8px/20px 'Liberation Mono',monospace;letter-spacing:0.518px;color:#26303a;-webkit-text-stroke:0.1px #26303a;">13</div>
<div class="t" style="left:410.10px;top:661.94px;font:400 16.2px/20px 'Liberation Mono',monospace;letter-spacing:0.296px;color:#222;">OFFICE CHAIRS      2  Black, leather, reclining                BLK-65123      98.99   197.98</div>
<div class="t" style="left:377.20px;top:662.04px;font:400 15.8px/20px 'Liberation Mono',monospace;letter-spacing:0.518px;color:#26303a;-webkit-text-stroke:0.1px #26303a;">14</div>
<div class="r" style="left:410px;top:686px;width:1045px;height:33px;background:#f7f7f7;"></div>
<div class="t" style="left:410.10px;top:695.69px;font:400 16.2px/20px 'Liberation Mono',monospace;letter-spacing:0.296px;color:#222;">                   5  Brown, Suede, reclining                  BRN-65509      89.00   445.00</div>
<div class="t" style="left:377.20px;top:695.79px;font:400 15.8px/20px 'Liberation Mono',monospace;letter-spacing:0.518px;color:#26303a;-webkit-text-stroke:0.1px #26303a;">15</div>
<div class="t" style="left:410.10px;top:729.44px;font:400 16.2px/20px 'Liberation Mono',monospace;letter-spacing:0.296px;color:#222;">                   8  Beige, Cloth, straight-back              BCO-33884      49.99   399.92</div>
<div class="t" style="left:377.20px;top:729.54px;font:400 15.8px/20px 'Liberation Mono',monospace;letter-spacing:0.518px;color:#26303a;-webkit-text-stroke:0.1px #26303a;">16</div>
<div class="r" style="left:410px;top:753px;width:1045px;height:34px;background:#f7f7f7;"></div>
<div class="t" style="left:377.20px;top:763.29px;font:400 15.8px/20px 'Liberation Mono',monospace;letter-spacing:0.518px;color:#26303a;-webkit-text-stroke:0.1px #26303a;">17</div>
<div class="t" style="left:377.20px;top:797.04px;font:400 15.8px/20px 'Liberation Mono',monospace;letter-spacing:0.518px;color:#26303a;-webkit-text-stroke:0.1px #26303a;">18</div>
<div class="r" style="left:410px;top:820px;width:1045px;height:34px;background:#f7f7f7;"></div>
<div class="t" style="left:410.10px;top:830.69px;font:400 16.2px/20px 'Liberation Mono',monospace;letter-spacing:0.296px;color:#222;">              ORDER ID:  909091    SHIP DATE: 01/15/09</div>
<div class="t" style="left:377.20px;top:830.79px;font:400 15.8px/20px 'Liberation Mono',monospace;letter-spacing:0.518px;color:#26303a;-webkit-text-stroke:0.1px #26303a;">19</div>
<div class="t" style="left:377.20px;top:864.54px;font:400 15.8px/20px 'Liberation Mono',monospace;letter-spacing:0.518px;color:#26303a;-webkit-text-stroke:0.1px #26303a;">20</div>
<div class="r" style="left:410px;top:888px;width:1045px;height:29px;background:#f7f7f7;"></div>
<div class="t" style="left:410.10px;top:898.19px;font:400 16.2px/20px 'Liberation Mono',monospace;letter-spacing:0.296px;color:#222;">RUGS               5  Centerpiece, black                                     199.99   999.95</div>
<div class="t" style="left:377.20px;top:898.29px;font:400 15.8px/20px 'Liberation Mono',monospace;letter-spacing:0.518px;color:#26303a;-webkit-text-stroke:0.1px #26303a;">21</div>
<div class="t" style="left:1041.50px;top:892.99px;font:400 16.2px/20px 'Liberation Mono',monospace;letter-spacing:0.296px;color:#222;">45633-CBR</div>
<div class="r" style="left:1455px;top:214px;width:20px;height:703px;background:#f0f0f0;"></div>
<div class="r" style="left:1455px;top:257px;width:19px;height:258.4px;background:#cdcdcd;"></div>
<svg class="r" style="left:1456px;top:216px" width="17" height="18" viewBox="1456 216 17 18"><path d="M1457.2 223.4 H1471.4 M1457.2 226.6 H1471.4" stroke="#111" stroke-width="1.5"/><path d="M1464.3 218 V222.6 M1464.3 227.4 V232" stroke="#111" stroke-width="1.4"/><path d="M1461.4 220.4 L1464.3 217 L1467.2 220.4 Z M1461.4 229.6 L1464.3 233 L1467.2 229.6 Z" fill="#111"/></svg>
<svg class="r" style="left:1457px;top:241px" width="15" height="12" viewBox="1457 241 15 12"><path d="M1460.4 249.4 L1464.4 244.6 L1468.4 249.4" stroke="#555" stroke-width="2.4" fill="none"/></svg>
<svg class="r" style="left:1457px;top:899px" width="15" height="13" viewBox="1457 899 15 13"><path d="M1460.4 903.2 L1464.4 908 L1468.4 903.2" stroke="#555" stroke-width="2.4" fill="none"/></svg>
<div class="r" style="left:332px;top:916px;width:1123px;height:1px;background:#ffffff;"></div>
<div class="r" style="left:332px;top:917px;width:1143px;height:20px;background:#f0f0f0;"></div>
<div class="r" style="left:354px;top:917.4px;width:521px;height:18px;background:#cdcdcd;"></div>
<svg class="r" style="left:336px;top:919px" width="14" height="15" viewBox="336 919 14 15"><path d="M345.6 922.6 L340 926.5 L345.6 930.4" stroke="#555" stroke-width="2.4" fill="none"/></svg>
<svg class="r" style="left:1436px;top:919px" width="14" height="15" viewBox="1436 919 14 15"><path d="M1440.8 922.6 L1446.4 926.5 L1440.8 930.4" stroke="#555" stroke-width="2.4" fill="none"/></svg>
<div class="r" style="left:331px;top:939px;width:1146px;height:29px;background:#edf0f5;"></div>
<div class="r" style="left:1090px;top:942px;width:121.5px;height:22.5px;background:#eef1f6;border-top:1px solid #a0a5ac;border-left:1px solid #a0a5ac;border-right:1px solid #fbfcfd;border-bottom:1px solid #fbfcfd;"></div>
<div class="t" style="left:1094.00px;top:943.80px;font:400 15px/20px 'Liberation Sans',sans-serif;letter-spacing:-0.055px;color:#1a1aff;">sampleorders.txt</div>
<div class="r" style="left:1214px;top:942px;width:1px;height:23px;background:#8f949b;"></div>
<div class="r" style="left:1276px;top:942px;width:1px;height:23px;background:#8f949b;"></div>
<div class="r" style="left:1336px;top:942px;width:1px;height:23px;background:#8f949b;"></div>
<div class="t" style="left:1217.00px;top:943.80px;font:400 15px/20px 'Liberation Sans',sans-serif;letter-spacing:-0.106px;color:#444;">Line:</div>
<div class="t" style="left:1262.50px;top:943.80px;font:700 15px/20px 'Liberation Sans',sans-serif;letter-spacing:0.000px;color:#1a1a1a;">1</div>
<div class="t" style="left:1281.00px;top:943.80px;font:400 15px/20px 'Liberation Sans',sans-serif;letter-spacing:-0.419px;color:#444;">Col:</div>
<div class="t" style="left:1319.50px;top:943.80px;font:700 15px/20px 'Liberation Sans',sans-serif;letter-spacing:0.000px;color:#1a1a1a;">0</div>
<svg class="r" style="left:1345px;top:946px;" width="18" height="18" viewBox="0 0 18 18"><circle cx="6.5" cy="6.5" r="5.3" fill="#fbfcfd" stroke="#3d3d3d" stroke-width="1.3"/><path d="M3.5 6.5 H9.5" stroke="#1d63b5" stroke-width="1.5"/><path d="M10.5 10.5 L16 16" stroke="#3d3d3d" stroke-width="2.4"/></svg>
<svg class="r" style="left:1374px;top:946px;" width="18" height="18" viewBox="0 0 18 18"><circle cx="6.5" cy="6.5" r="5.3" fill="#fbfcfd" stroke="#3d3d3d" stroke-width="1.3"/><path d="M3.5 6.5 H9.5 M6.5 3.5 V9.5" stroke="#1d63b5" stroke-width="1.5"/><path d="M10.5 10.5 L16 16" stroke="#3d3d3d" stroke-width="2.4"/></svg>
<div class="r" style="left:1399px;top:943px;width:43px;height:23px;background:#ffffff;"></div>
<div class="t" style="left:1403.00px;top:943.80px;font:400 15px/20px 'Liberation Sans',sans-serif;letter-spacing:-0.841px;color:#444;">100%</div>
<svg class="r" style="left:1444.5px;top:953px;" width="7" height="4" viewBox="0 0 7 4"><path d="M0 0 H7 L3.5 4 Z" fill="#111"/></svg>
<svg class="r" style="left:1460px;top:952px;" width="14" height="14" viewBox="0 0 14 14"><rect x="9.6" y="0.8" width="2.4" height="2.4" fill="#9aa0a8"/><rect x="5.2" y="5.2" width="2.4" height="2.4" fill="#9aa0a8"/><rect x="9.6" y="5.2" width="2.4" height="2.4" fill="#9aa0a8"/><rect x="0.8" y="9.6" width="2.4" height="2.4" fill="#9aa0a8"/><rect x="5.2" y="9.6" width="2.4" height="2.4" fill="#9aa0a8"/><rect x="9.6" y="9.6" width="2.4" height="2.4" fill="#9aa0a8"/></svg>
<div class="r" style="left:1477px;top:118px;width:7px;height:851px;background:#efefef;"></div>
<div class="r" style="left:1484px;top:118px;width:428px;height:851px;background:#e2e9f1;"></div>
<div class="r" style="left:1484px;top:118px;width:1px;height:851px;background:#dfe5ec;"></div>
<div class="r" style="left:1912px;top:118px;width:8px;height:851px;background:#f2f6fa;"></div>
<div class="t" style="left:1489.00px;top:128.80px;font:400 15px/20px 'Liberation Sans',sans-serif;letter-spacing:-0.135px;color:#444;">Report Options</div>
<svg class="r" style="left:1859px;top:132px;" width="52" height="14" viewBox="0 0 52 14"><path d="M2 4.5 H11 L6.5 9.5 Z" fill="#222"/><path d="M22 1.5 H27 M22.7 1.5 V7.5 M26.3 1.5 V7.5 M20.5 7.5 H28.5 M24.5 7.5 V12" stroke="#222" stroke-width="1.3" fill="none"/><path d="M38 2.4 L47 11.4 M47 2.4 L38 11.4" stroke="#222" stroke-width="2.5" fill="none"/></svg>
<div class="r" style="left:1485px;top:159px;width:426px;height:771px;background:#ffffff;"></div>
<div class="r" style="left:1500px;top:164px;width:395px;height:96px;background:#ffffff;border:1px solid #e6eaef;border-radius:9px;box-shadow:0 1px 1px #f0f3f6;"></div>
<div class="r" style="left:1501px;top:165px;width:393px;height:35px;background:linear-gradient(180deg,#f3f6fa 0%,#f8fafc 50%,#ffffff 100%);border-radius:8px 8px 0 0;"></div>
<div class="r" style="left:1501px;top:200px;width:393px;height:1px;background:#e3e7ed;"></div>
<div class="t" style="left:1525.30px;top:172.58px;font:700 14.5px/20px 'Liberation Sans',sans-serif;letter-spacing:-0.527px;color:#111;">Data File Location</div>
<div class="t" style="left:1508.00px;top:207.50px;font:400 15px/20px 'Liberation Sans',sans-serif;letter-spacing:-0.714px;color:#333;">Path</div>
<div class="r" style="left:1599px;top:209.5px;width:233px;height:24px;background:#ffffff;border:1px solid #dcdfe4;"></div>
<div class="r" style="left:1832px;top:209.5px;width:45px;height:24px;background:#efefef;"></div>
<div class="t" style="left:1606.70px;top:211.35px;font:400 14px/20px 'Liberation Sans',sans-serif;letter-spacing:-0.029px;color:#1a1a1a;">C:\Users\Kanwal.Azim\OneDrive - </div>
<div class="r" style="left:1819.5px;top:211px;width:6px;height:20px;overflow:hidden"><div class="t" style="left:0;top:0.6px;font:400 14px/20px 'Liberation Sans',sans-serif;color:#1a1a1a">A</div></div>
<svg class="r" style="left:1837px;top:214px" width="23" height="17" viewBox="1837 214 23 17"><g transform="translate(1773.2,151.3) scale(0.77,0.84)"><path d="M85.5 79.6 Q85.5 79.1 86 79.1 H93.2 L95.6 76.9 H102.4 Q103.1 76.9 103.1 77.6 V83 H89.5 L85.5 93 Z" fill="#fdf6ea" stroke="#e9b968" stroke-width="1.1"/><path d="M89.3 82.4 H107.6 L103.3 94.9 H85 Z" fill="#e8b661"/><path d="M85 80 V94.9 H86.2 L90 82.4 H89 Z" fill="#f1cf96"/></g></svg>
<svg class="r" style="left:1866.2px;top:220.3px;" width="7.8" height="4" viewBox="0 0 7.8 4"><path d="M0 0 H7.8 L3.9 4 Z" fill="#1c2540"/></svg>
<div class="t" style="left:1603.00px;top:232.75px;font:400 14px/20px 'Liberation Sans',sans-serif;letter-spacing:-0.016px;color:#777;">C:\Users\Ka...\sampleorders.txt</div>
<div class="r" style="left:1500px;top:287px;width:395px;height:94px;background:#ffffff;border:1px solid #e6eaef;border-radius:9px;box-shadow:0 1px 1px #f0f3f6;"></div>
<div class="r" style="left:1501px;top:288px;width:393px;height:35px;background:linear-gradient(180deg,#f3f6fa 0%,#f8fafc 50%,#ffffff 100%);border-radius:8px 8px 0 0;"></div>
<div class="r" style="left:1501px;top:323px;width:393px;height:1px;background:#e3e7ed;"></div>
<div class="t" style="left:1521.00px;top:294.98px;font:700 14.5px/20px 'Liberation Sans',sans-serif;letter-spacing:-0.467px;color:#111;">Reading Options</div>
<svg class="r" style="left:1872px;top:300px" width="12" height="12" viewBox="1872 300 12 12"><path d="M1873.4 301.2 H1882.6 L1878 310.2 Z" fill="#111"/></svg>
<div class="r" style="left:1515px;top:339px;width:16.6px;height:16.6px;background:#ffffff;border:1.3px solid #444;"></div>
<div class="t" style="left:1539.00px;top:338.15px;font:400 14px/20px 'Liberation Sans',sans-serif;letter-spacing:-0.245px;color:#333;">Remove Blank Lines</div>
<div class="r" style="left:1500px;top:396px;width:395px;height:37px;background:#ffffff;border:1px solid #e6eaef;border-bottom:1px solid #e3e7ed;border-radius:9px 9px 0 0;"></div>
<div class="r" style="left:1501px;top:397px;width:393px;height:35px;background:linear-gradient(180deg,#f3f6fa 0%,#f8fafc 50%,#ffffff 100%);border-radius:8px 8px 0 0;"></div>
<div class="t" style="left:1521.00px;top:403.98px;font:700 14.5px/20px 'Liberation Sans',sans-serif;letter-spacing:-0.498px;color:#111;">Other Options</div>
<svg class="r" style="left:1872px;top:408px" width="12" height="13" viewBox="1872 408 12 13"><path d="M1873.2 410 L1881.6 414.5 L1873.2 419 Z" fill="#111"/></svg>
<div class="r" style="left:1753px;top:932px;width:147px;height:37px;background:#d5d9de;"></div>
<div class="t" style="left:1491.00px;top:940.80px;font:400 15px/20px 'Liberation Sans',sans-serif;letter-spacing:-0.107px;color:#333;">Project Explorer</div>
<div class="t" style="left:1628.00px;top:940.80px;font:400 15px/20px 'Liberation Sans',sans-serif;letter-spacing:-0.347px;color:#333;">Server Explorer</div>
<div class="t" style="left:1760.00px;top:940.80px;font:400 15px/20px 'Liberation Sans',sans-serif;letter-spacing:-0.209px;color:#333;">Report Properties</div>
<svg class="r" style="left:592px;top:173px" width="28" height="25" viewBox="592 173 28 25"><path d="M597.2 183.2 A9 9 0 0 1 613.6 181.2" fill="none" stroke="#40c040" stroke-width="2.2"/><path d="M614 187.2 A9 9 0 0 1 597.6 189" fill="none" stroke="#40c040" stroke-width="2.2"/><path d="M608.4 181.6 L617.8 181.2 L613.4 188.6 Z" fill="#40c040"/><path d="M602.8 188.6 L593.4 189 L597.8 181.6 Z" fill="#40c040"/></svg>
<svg class="r" style="left:639px;top:176px" width="26" height="18" viewBox="639 176 26 18"><g transform="translate(338.93,101.8) scale(0.932,1)"><path d="M323.9 78.8 L323.9 90 L334.6 90 L331.2 86.4 C334.5 82.6 341 81.8 347.5 84.8 C343.5 77.6 333.5 74.6 327.6 82.4 Z" fill="#b4b6b9"/></g></svg>
<svg class="r" style="left:694px;top:176px" width="26" height="18" viewBox="694 176 26 18"><g transform="translate(1358.7,0) scale(-1,1)"><g transform="translate(338.93,101.8) scale(0.932,1)"><path d="M323.9 78.8 L323.9 90 L334.6 90 L331.2 86.4 C334.5 82.6 341 81.8 347.5 84.8 C343.5 77.6 333.5 74.6 327.6 82.4 Z" fill="#b4b6b9"/></g></g></svg>
<svg class="r" style="left:675.9px;top:183.9px;" width="7.1" height="4" viewBox="0 0 7.1 4"><path d="M0 0 H7.1 L3.55 4 Z" fill="#9c9ea1"/></svg>
<svg class="r" style="left:730.8px;top:183.9px;" width="7.1" height="4" viewBox="0 0 7.1 4"><path d="M0 0 H7.1 L3.55 4 Z" fill="#9c9ea1"/></svg>
<svg class="r" style="left:753px;top:172px" width="29" height="25" viewBox="753 172 29 25"><path d="M760.8 173.8 H764.9 V176.2 H765.3 V191.3 H755 V186 L757.2 180 L759.6 176.2 H760.8 Z M769.3 173.8 H773.2 V176.2 H774.4 L776 180 L778.9 186.5 V189 H768.9 V176.2 H769.3 Z" fill="#2a8fe0"/><rect x="765" y="179.4" width="4.2" height="3.6" fill="#2a8fe0"/><rect x="755" y="191.6" width="10.6" height="2.9" fill="#f7981d"/><path d="M769.7 189.7 H775 V187.2 L780.2 191.3 L775 195.4 V192.9 H769.7 Z" fill="#f7981d"/></svg>
<svg class="r" style="left:792px;top:173px" width="26" height="24" viewBox="792 173 26 24"><rect x="794.3" y="174.7" width="20.6" height="17.6" fill="#ffffff" stroke="#dcdee1" stroke-width="1"/><circle cx="798.2" cy="183.4" r="2.7" fill="#f7981d"/><circle cx="803.8" cy="183.4" r="2.7" fill="#f7981d"/><rect x="798" y="182.7" width="6" height="1.4" fill="#f7981d"/><circle cx="810.6" cy="183.4" r="2.4" fill="#fff" stroke="#2e8de0" stroke-width="2"/><circle cx="810.6" cy="183.4" r="3.6" fill="none" stroke="#2e8de0" stroke-width="1" stroke-dasharray="1.4 1.4"/><circle cx="806.6" cy="190.9" r="2.9" fill="#fff" stroke="#8b8d90" stroke-width="2.2"/><circle cx="806.6" cy="190.9" r="4.3" fill="none" stroke="#8b8d90" stroke-width="1.4" stroke-dasharray="1.7 1.68"/></svg>
<svg class="r" style="left:830px;top:173px" width="26" height="24" viewBox="830 173 26 24"><rect x="831.3" y="180" width="22" height="13.2" fill="#eef0f2"/><path d="M846 183.5 H852 M846 186.8 H852 M846 190 H852" stroke="#dfe1e4" stroke-width="1"/><rect x="831" y="174.7" width="23" height="5.4" rx="1.2" fill="#f7981d"/><path d="M846 177.4 H852" stroke="#fde3c0" stroke-width="1.2" stroke-dasharray="1.2 1"/><circle cx="840.3" cy="186.9" r="5.1" fill="#dcedfb" stroke="#2e8de0" stroke-width="2.3"/><path d="M836.4 190.9 L832.6 194.6" stroke="#2e8de0" stroke-width="2.8" stroke-linecap="round"/></svg>
<svg class="r" style="left:868px;top:172px" width="25" height="25" viewBox="868 172 25 25"><rect x="870.6" y="180.3" width="5.4" height="15.3" fill="#2a8fe0"/><rect x="877.8" y="183.8" width="5.3" height="11.8" fill="#f7981d"/><rect x="885" y="187.2" width="5" height="8.4" fill="#9b9b9b"/><path d="M872.8 176.3 L880.3 178.8 L887.5 182.2" stroke="#40c040" stroke-width="1.6" fill="none"/><circle cx="872.8" cy="176.3" r="2.9" fill="#40c040"/><circle cx="880.3" cy="178.8" r="2.7" fill="#40c040"/><circle cx="887.5" cy="182.2" r="2.7" fill="#40c040"/></svg>
<svg class="r" style="left:903px;top:171px" width="29" height="26" viewBox="903 171 29 26"><rect x="906" y="176.3" width="12.8" height="17.6" fill="#fbdcb0"/><path d="M906 177.5 H918.8 M906 182.6 H918.8 M906 187.6 H918.8 M906 192.6 H918.8" stroke="#f7981d" stroke-width="2.4"/><circle cx="920.3" cy="185" r="5.6" fill="#fff" stroke="#3a8fd9" stroke-width="2.6"/><circle cx="920.3" cy="185" r="7.6" fill="none" stroke="#3a8fd9" stroke-width="2.2" stroke-dasharray="2.9 3.07"/><path d="M918.4 187.6 L921.4 181.4 L921.3 184.3 L923.6 183.8 L920 189.2 L920.2 186.4 Z" fill="#f7981d"/><path d="M908.6 172.8 V179.8 M905 176.3 H912.2" stroke="#4ea454" stroke-width="2.6"/></svg>
<div class="t" style="left:944.40px;top:174.62px;font:700 23.6px/20px 'Liberation Sans',sans-serif;letter-spacing:0.000px;color:#2f6bc0;font-family:'DejaVu Serif',serif;transform:scaleX(0.88);transform-origin:left;">A</div>
<svg class="r" style="left:953px;top:179px" width="16" height="16" viewBox="953 179 16 16"><path d="M955 193.4 L956.4 189.4 L963.4 182.4 L966 185 L959 192 Z" fill="#f0932b"/><path d="M963.4 182.4 L964.6 181.2 Q965.4 180.6 966.2 181.4 L967 182.2 Q967.6 183 967 183.8 L966 185 Z" fill="#9a9c9f"/><path d="M955 193.4 L955.8 191 L957.4 192.6 Z" fill="#555"/></svg>
<div class="r" style="left:987.6px;top:174px;width:23.0px;height:22px;background:#f0f2f4;border:1px solid #e9ebee;"></div>
<div class="t" style="left:991.20px;top:169.50px;font:400 15px/20px 'Liberation Sans',sans-serif;letter-spacing:0.000px;color:#cdcfd2;">a</div>
<div class="t" style="left:1000.40px;top:178.20px;font:700 15px/20px 'Liberation Sans',sans-serif;letter-spacing:0.000px;color:#b2b4b7;">z</div>
<div class="r" style="left:1025.2px;top:174px;width:23.299999999999955px;height:22px;background:#f0f2f4;border:1px solid #e9ebee;"></div>
<div class="t" style="left:1028.60px;top:173.45px;font:400 14px/20px 'Liberation Sans',sans-serif;letter-spacing:0.000px;color:#cdcfd2;">0</div>
<div class="t" style="left:1038.80px;top:178.20px;font:700 15px/20px 'Liberation Sans',sans-serif;letter-spacing:0.000px;color:#b2b4b7;">9</div>
<div class="r" style="left:1062.8px;top:174px;width:22.90000000000009px;height:22px;background:#f0f2f4;border:1px solid #e9ebee;"></div>
<div class="t" style="left:1066.00px;top:170.06px;font:400 10.5px/20px 'Liberation Sans',sans-serif;letter-spacing:0.971px;color:#cdcfd2;">a-z</div>
<div class="t" style="left:1067.20px;top:180.67px;font:700 10.2px/20px 'Liberation Sans',sans-serif;letter-spacing:0.452px;color:#b2b4b7;">0-9</div>
<div class="r" style="left:1100.3px;top:174px;width:23.299999999999955px;height:22px;background:#f0f2f4;border:1px solid #e9ebee;"></div>
<div class="r" style="left:1104px;top:190.5px;width:16px;height:2.2px;background:#b9bbbe;"></div>
<div class="r" style="left:1138.2px;top:174px;width:23.09999999999991px;height:22px;background:#f0f2f4;border:1px solid #e9ebee;"></div>
<div class="t" style="left:1141.60px;top:174.80px;font:700 15px/20px 'Liberation Sans',sans-serif;letter-spacing:0.000px;color:#a9abae;">[</div>
<div class="t" style="left:1152.60px;top:174.80px;font:700 15px/20px 'Liberation Sans',sans-serif;letter-spacing:0.000px;color:#a9abae;">]</div>
<svg class="r" style="left:1181px;top:173px" width="28" height="23" viewBox="1181 173 28 23"><rect x="1182.4" y="174" width="17.6" height="5.4" fill="#b0b2b5"/><rect x="1182.4" y="180.6" width="20.6" height="13.6" fill="#d6d8da"/><path d="M1182.4 185 H1203 M1182.4 189.4 H1203" stroke="#c3c5c8" stroke-width="0.9"/><circle cx="1201" cy="188" r="6.6" fill="#b4b6b9"/><path d="M1197.6 188.2 L1200.2 190.8 L1204.6 185.6" stroke="#f4f6f8" stroke-width="1.7" fill="none"/></svg>
<svg class="r" style="left:1221px;top:182px" width="23" height="8" viewBox="1221 182 23 8"><circle cx="1225" cy="185.9" r="2.7" fill="#909296"/><circle cx="1232.3" cy="185.9" r="2.7" fill="#909296"/><circle cx="1239.6" cy="185.9" r="2.7" fill="#909296"/></svg>
<div class="r" style="left:0px;top:30px;width:1px;height:978px;background:#d0d4d8;"></div>
<div class="r" style="left:1919px;top:30px;width:1px;height:978px;background:#d9dcdf;"></div>
</body></html>
